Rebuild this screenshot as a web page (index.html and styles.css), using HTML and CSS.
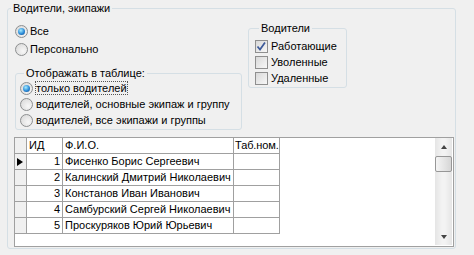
FILE: index.html
```html
<!DOCTYPE html>
<html lang="ru">
<head>
  <meta charset="UTF-8">
  <title>Водители, экипажи</title>
  <link rel="stylesheet" href="styles.css">
</head>
<body>
  <fieldset class="group outer">
    <legend>Водители, экипажи</legend>

    <div class="top">
      <div class="left">
        <label class="radio"><span class="rb on"></span>Все</label>
        <label class="radio"><span class="rb"></span>Персонально</label>

        <fieldset class="group view">
          <legend>Отображать в таблице:</legend>
          <label class="radio small"><span class="rb on"></span><span class="focus">только водителей</span></label>
          <label class="radio small"><span class="rb"></span>водителей, основные экипаж и группу</label>
          <label class="radio small"><span class="rb"></span>водителей, все экипажи и группы</label>
        </fieldset>
      </div>

      <fieldset class="group drivers">
        <legend>Водители</legend>
        <label class="check"><span class="cb"><svg width="11" height="11" viewBox="0 0 11 11"><path d="M1.5 5.5 L4 8.5 L9 1.5" fill="none" stroke="#3d5a9a" stroke-width="1.7"/></svg></span>Работающие</label>
        <label class="check"><span class="cb"></span>Уволенные</label>
        <label class="check"><span class="cb"></span>Удаленные</label>
      </fieldset>
    </div>

    <!-- таблица водителей -->
    <div class="grid">
      <table>
        <colgroup>
          <col class="c-ind">
          <col class="c-id">
          <col class="c-name">
          <col class="c-tab">
        </colgroup>
        <tr class="head">
          <td class="ind"></td>
          <td>ИД</td>
          <td>Ф.И.О.</td>
          <td class="tab">Таб.ном.</td>
        </tr>
        <tr>
          <td class="ind"><span class="arrow"></span></td>
          <td class="num">1</td>
          <td>Фисенко Борис Сергеевич</td>
          <td></td>
        </tr>
        <tr>
          <td class="ind"></td>
          <td class="num">2</td>
          <td>Калинский Дмитрий Николаевич</td>
          <td></td>
        </tr>
        <tr>
          <td class="ind"></td>
          <td class="num">3</td>
          <td>Констанов Иван Иванович</td>
          <td></td>
        </tr>
        <tr>
          <td class="ind"></td>
          <td class="num">4</td>
          <td>Самбурский Сергей Николаевич</td>
          <td></td>
        </tr>
        <tr>
          <td class="ind"></td>
          <td class="num">5</td>
          <td>Проскуряков Юрий Юрьевич</td>
          <td></td>
        </tr>
      </table>

      <div class="scroll">
        <div class="btn"><span class="up"></span></div>
        <div class="thumb"></div>
        <div class="track"></div>
        <div class="btn"><span class="down"></span></div>
      </div>
    </div>
  </fieldset>
</body>
</html>
```

FILE: styles.css
```css
body {
  margin: 0;
  width: 474px;
  height: 255px;
  overflow: hidden;
  background-color: #f0f0f0;
  font-family: "Liberation Sans", Arial, sans-serif;
  font-size: 11px;
  color: #000;
}
.group {
  box-sizing: border-box;
  margin: 0;
  padding: 0;
  min-width: 0;
  border: 1px solid #d5dfe5;
  border-radius: 3px;
}
.group legend {
  padding: 0 2px;
  height: 13px;
  line-height: 13px;
}
.outer {
  margin: 2px 0 0 7px;
  width: 449px;
  height: 247px;
  padding-top: 7px;
}
.outer > legend {
  margin-left: 3px;
}
.top {
  display: flex;
  align-items: flex-start;
  gap: 6px;
  padding-left: 7px;
}
.left {
  width: 227px;
  display: flex;
  flex-direction: column;
}
.radio {
  display: flex;
  align-items: center;
  height: 18px;
  gap: 2px;
}
.radio.small {
  height: 16px;
  gap: 3px;
}
.rb {
  box-sizing: border-box;
  width: 13px;
  height: 13px;
  border-radius: 50%;
  border: 1px solid #8d8f90;
  background: radial-gradient(circle at 65% 65%, #f7f7f7, #dcdcdc 80%);
  display: flex;
  align-items: center;
  justify-content: center;
  flex: none;
}
.rb.on::after {
  content: "";
  width: 7px;
  height: 7px;
  border-radius: 50%;
  background: radial-gradient(circle at 40% 35%, #a6ecff, #2b8bd8 55%, #0c3f7e);
}
.view {
  width: 227px;
  margin-top: 9px;
  padding: 0 0 1px 4px;
}
.view legend {
  margin-left: 4px;
}
.focus {
  margin-left: -1px;
  border: 1px dotted #555;
  line-height: 12px;
}
.drivers {
  width: 99px;
  padding: 3px 0 1px 6px;
}
.drivers legend {
  margin-left: 4px;
}
.check {
  display: flex;
  align-items: center;
  height: 16px;
  gap: 3px;
}
.cb {
  box-sizing: border-box;
  width: 13px;
  height: 13px;
  border: 1px solid #8f8f8f;
  background: linear-gradient(135deg, #d9d9d9, #f7f7f7);
  display: flex;
  align-items: center;
  justify-content: center;
  flex: none;
}
.grid {
  box-sizing: border-box;
  display: flex;
  align-items: flex-start;
  width: 440px;
  height: 110px;
  margin: 7px 0 0 6px;
  border: 1px solid #a0a0a0;
  background-color: #fff;
}
table {
  table-layout: fixed;
  border-collapse: separate;
  border-spacing: 0;
  width: 265px;
}
.c-ind { width: 12px; }
.c-id { width: 36px; }
.c-name { width: 171px; }
.c-tab { width: 46px; }
td {
  padding: 0 0 0 2px;
  height: 15px;
  line-height: 15px;
  border-right: 1px solid #a0a0a0;
  border-bottom: 1px solid #a0a0a0;
  white-space: nowrap;
  overflow: hidden;
}
td.tab {
  padding-left: 1px;
  letter-spacing: -0.1px;
}
td.ind {
  padding: 0;
  background-color: #f0f0f0;
}
td.num {
  text-align: right;
  padding: 0 2px 0 0;
}
.arrow {
  display: block;
  width: 0;
  height: 0;
  margin-left: 2px;
  border-left: 6px solid #000;
  border-top: 4.5px solid transparent;
  border-bottom: 4.5px solid transparent;
}
.scroll {
  box-sizing: border-box;
  margin-left: auto;
  margin-right: 1px;
  width: 17px;
  height: 107px;
  display: flex;
  flex-direction: column;
  border-left: 1px solid #e6e6e6;
  border-right: 1px solid #e6e6e6;
  background: linear-gradient(to right, #e7e7e7, #f3f3f3 40%, #f3f3f3 60%, #e7e7e7);
}
.btn {
  height: 17px;
  display: flex;
  align-items: center;
  justify-content: center;
  flex: none;
}
.up, .down {
  width: 0;
  height: 0;
  border-left: 3.5px solid transparent;
  border-right: 3.5px solid transparent;
}
.up {
  border-bottom: 4px solid #444;
}
.down {
  border-top: 4px solid #444;
}
.thumb {
  box-sizing: border-box;
  height: 16px;
  margin: 1px -1px 0;
  border: 1px solid #979797;
  border-radius: 2px;
  background: linear-gradient(to right, #f4f4f4, #e6e6e6 50%, #d6d6d6);
}
.track {
  flex: 1;
}
```
